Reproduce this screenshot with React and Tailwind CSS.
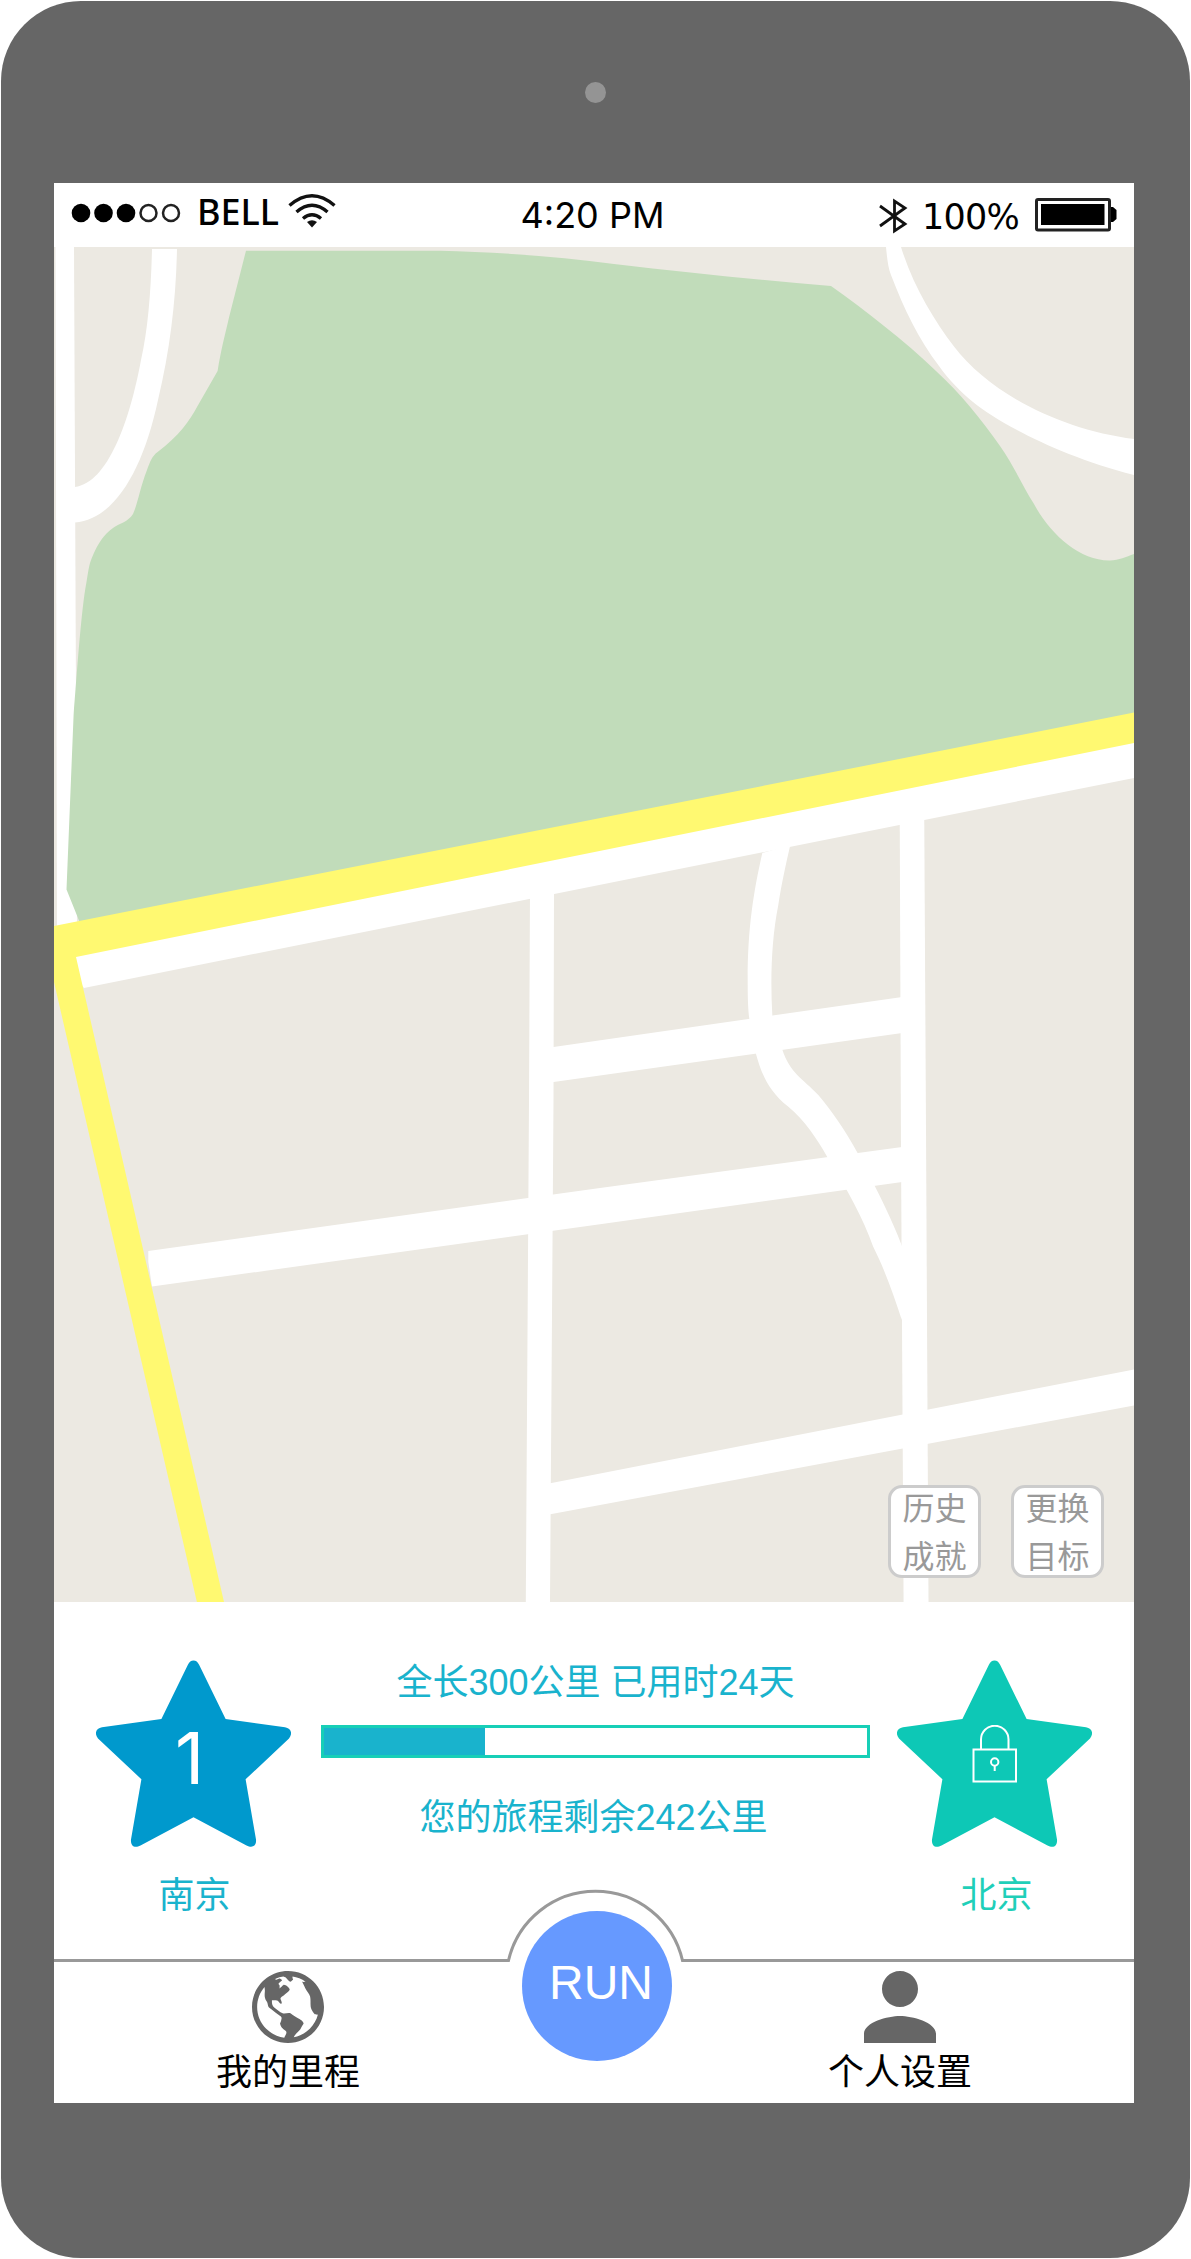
import { IoMdGlobe } from "react-icons/io";

const cjk = "font-['Liberation_Sans','Noto_Sans_CJK_SC',sans-serif] font-normal";

function Star({ className, children }) {
  return (
    <div className="relative h-[187px] w-[195px]">
      <svg viewBox="0 0 195 187" className={`block h-full w-full ${className}`} fill="currentColor">
        <path d="M97.5 0.500C99.9 0.500 101.8 2 103.1 4.8L129.6 59L189 67.3C195 68.2 197 73.6 193 78.5L149.6 119.3L160 179.5C160.6 185.8 156.5 188.6 150.5 185.4L97.5 157.3L44.5 185.4C38.5 188.6 34.4 185.8 35 179.5L45.4 119.3L2 78.5C-2 73.6 0 68.2 6 67.3L65.4 59L91.9 4.8C93.2 2 95.1 0.500 97.5 0.500Z" />
      </svg>
      {children}
    </div>
  );
}

function Lock() {
  return (
    <svg viewBox="0 0 46 58" className="absolute left-[75px] top-[65px] h-[58px] w-[46px]" fill="none" stroke="#fff" strokeWidth="2">
      <path d="M9 24V14.500A13.500 13.500 0 0 1 36.500 14.500V24" />
      <rect x="1.500" y="24.500" width="42.500" height="32" />
      <circle cx="22.700" cy="37" r="3.700" />
      <path d="M22.700 41V46" />
    </svg>
  );
}

function StatusBar() {
  return (
    <header className="relative flex h-16 shrink-0 items-center justify-between bg-white pl-4 pr-[17px] text-black">
      <div className="flex items-center">
        <svg viewBox="0 0 112 20" className="mt-[-4px] h-5 w-28">
          {[11, 33.5, 56].map((x) => (
            <circle key={x} cx={x} cy="10" r="9.300" />
          ))}
          {[78.5, 101].map((x) => (
            <circle key={x} cx={x} cy="10" r="8" fill="none" stroke="#222" strokeWidth="2.500" />
          ))}
        </svg>
        <span className="ml-[15px] mt-[-6px] w-[84px] font-['Noto_Sans'] text-[36px] font-medium leading-[54px]">BELL</span>
        <svg viewBox="0 0 48 36" className="ml-[7px] mt-[-8px] h-9 w-12" fill="none" stroke="#111" strokeWidth="3.400">
          <path d="M1.500 12.500Q24-7 46.500 12.500" />
          <path d="M8.500 19Q24 5.500 39.500 19" />
          <path d="M15 25.500Q24 18 33 25.500" />
          <path d="M19 29Q24 25.500 29 29L24 34.500Z" fill="#111" stroke="none" />
        </svg>
      </div>
      <span className="absolute left-[538.500px] top-[5px] -translate-x-1/2 whitespace-nowrap font-['Inter'] text-[36px] leading-[54px]">
        4:20 PM
      </span>
      <div className="flex items-center">
        <svg viewBox="0 0 32 36" className="mt-[2px] h-9 w-8" fill="none" stroke="#111" strokeWidth="2.800">
          <path d="M3 8L28 26L17.500 33V3L28 10L3 28" />
        </svg>
        <span className="ml-[13px] mt-[3px] w-[102px] whitespace-nowrap font-['DejaVu_Sans'] text-[35px] leading-[54px] tracking-[-0.8px]">
          100%
        </span>
        <svg viewBox="0 0 82 34" className="ml-[11px] h-[34px] w-[82px]">
          <rect x="1.500" y="1.500" width="73" height="30.500" rx="1.500" fill="none" stroke="#222" strokeWidth="3" />
          <rect x="6" y="6" width="63.500" height="21" />
          <path d="M76 9H78L81.500 12V21L78 24H76Z" />
        </svg>
      </div>
    </header>
  );
}

function MapArt() {
  return (
    <svg viewBox="54 247 1080 1355" className="block h-full w-full">
      <rect x="54" y="247" width="1080" height="1355" fill="#ece9e2" />
      <g fill="#fff">
        <path d="M55.500 247H74L76 700L77 930H57Z" />
        <path d="M152 249C151 290 148 330 141 360C130 420 108 483 75 487V522.600C115 519 143 470 158 400C170 350 176 300 177 249Z" />
        <path d="M886 247C887 257 888 268 891 275C904 309 919 340 939 366C949 380 961 392 973 402C999 423 1059 456 1134 475V439C1061 430 989 393 954 346.600C934 320 913 286 901 247Z" />
      </g>
      <path
        fill="#c1dcba"
        d="M246 250.700H439.700C500 252 560 257 614 264C690 273 760 280 831 286C866 311 905 341 936 371C960 393 982 420 1000 446C1014 466 1022 485 1034 504C1050 534 1080 561 1110 560.400C1119 560 1126 557 1134 554V715L80 923L66.500 889.500L73.600 715C76.500 680 81 610 86.500 582C89 567 89 564 93.500 554C98 544 104 534 113 528C120 523 128 522 133 514C138 503 140 488 147 470C150 462 152 456 157.600 452C179 436 190 420 197 407L217.600 371C221 350 225 335 229 317.600Z"
      />
      <g fill="#fff">
        <path d="M60 955L1134 740V778L84 988Z" />
        <path d="M530 890H554L553.500 1100L550 1602H525.800L529 1100Z" />
        <path d="M899.700 810H924.200L926 1130L928.500 1602H903.600L901 1150Z" />
        <path d="M550 1047.400L904 996.700V1032.700L550 1082.500Z" />
        <path d="M148.300 1251L600 1188L904 1146.700V1181.700L600 1224.200L152 1286.600L148.300 1262Z" />
        <path d="M549 1483.500L1134 1369.500V1405.500L549 1514.500Z" />
        <path d="M763 853C754 893 748 930 748.400 985C748.400 1000 749 1012 750 1018.500C751 1032 753 1043 756.700 1054C762 1074 770 1092 788.800 1106.600C806 1121 817 1138 828 1157C848 1190 864 1218 873.800 1246.600C886 1271 894 1294 902.500 1320L906 1255C896 1227 885 1205 875.700 1186.500C868 1173 866 1164 858 1152.500C847 1132 832 1110 819 1095C803 1078 791 1074 782.800 1049C775 1037 773 1025 773 1015C771 980 772 940 779 905C782 885 787 862 791 845Z" transform="translate(-0.7 0)" />
      </g>
      <path fill="#fff971" d="M54 926L1134 712.600V743L76 957L224 1602H196.900L54 982Z" />
    </svg>
  );
}

function MapButton({ lines }) {
  return (
    <button className={`flex h-[93px] w-[93px] flex-col items-center justify-center rounded-[14px] border-[3px] border-[#ccc] bg-white pt-[3px] text-[32px] leading-[48px] text-[#999] ${cjk}`}>
      {lines.map((line) => (
        <span key={line} className="block">{line}</span>
      ))}
    </button>
  );
}

function Journey() {
  return (
    <section className="flex h-[357px] shrink-0 items-start bg-white pl-[42px] text-[36px] leading-[54px] text-[#19b3cd]">
      <div className="mt-[58px] flex flex-col items-center">
        <Star className="text-[#0099cd]">
          <span className="absolute left-[79px] top-[57px] font-['Inter'] text-[72px] leading-[82px] text-white">1</span>
        </Star>
        <p className={`mt-[22px] pl-0.5 ${cjk}`}>南京</p>
      </div>
      <div className={`ml-[30px] mt-[54px] w-[549px] text-center ${cjk}`}>
        <p>全长300公里 已用时24天</p>
        <div className="mt-[15px] h-[33px] border-[3px] border-[#17cfb7]">
          <div className="h-full w-[161px] bg-[#19b3cd]" />
        </div>
        <p className="mt-[33px] pr-1">您的旅程剩余242公里</p>
      </div>
      <div className="ml-[27px] mt-[58px] flex flex-col items-center">
        <Star className="text-[#0dc8b6]">
          <Lock />
        </Star>
        <p className={`mt-[22px] pl-1 text-[#1fcfb9] ${cjk}`}>北京</p>
      </div>
    </section>
  );
}

function NavItem({ label, children }) {
  return (
    <a className="flex w-40 flex-col items-center pt-3">
      {children}
      <span className={`mt-[3px] whitespace-nowrap text-[36px] leading-[54px] text-black ${cjk}`}>{label}</span>
    </a>
  );
}

function BottomNav() {
  return (
    <nav className="relative flex h-36 shrink-0 items-start bg-white">
      <svg viewBox="54 1887 1080 76" className="absolute left-0 top-[-72px] h-[76px] w-[1080px]">
        <path
          d="M54 1960.500H508.500A89.300 89.300 0 0 1 682.500 1960.500H1134"
          fill="#fff"
          stroke="#999"
          strokeWidth="3"
        />
      </svg>
      <div className="relative ml-[154px]">
        <NavItem label="我的里程">
          <IoMdGlobe viewBox="48 48 416 416" className="h-[72px] w-[72px] text-[#666]" />
        </NavItem>
      </div>
      <button className="relative ml-[154px] mt-[-48px] h-[150px] w-[150px] rounded-full bg-[#6699ff] pb-1.5 pl-2 font-['Liberation_Sans'] text-[48px] leading-[54px] text-white">
        RUN
      </button>
      <div className="relative ml-[148px]">
        <NavItem label="个人设置">
          <svg viewBox="4 4 16 16" className="h-[72px] w-[72px] text-[#666]" fill="currentColor">
            <path d="M12 12c2.210 0 4-1.790 4-4s-1.790-4-4-4-4 1.790-4 4 1.790 4 4 4zm0 2c-2.670 0-8 1.340-8 4v2h16v-2c0-2.660-5.330-4-8-4z" />
          </svg>
        </NavItem>
      </div>
    </nav>
  );
}

export default function App() {
  return (
    <div className="h-[2259px] w-[1191px] bg-white p-px">
      <div className="flex h-full w-full flex-col rounded-[80px] bg-[#666] pl-[53px]">
        <div className="flex h-[182px] w-[1083px] shrink-0 justify-center pt-[81px]">
          <div className="h-[21px] w-[21px] rounded-full bg-[#949494]" />
        </div>
        <main className="flex h-[1920px] w-[1080px] flex-col bg-white">
          <StatusBar />
          <div className="relative h-[1355px] shrink-0">
            <MapArt />
            <div className="absolute bottom-6 right-[30px] flex gap-[30px]">
              <MapButton lines={["历史", "成就"]} />
              <MapButton lines={["更换", "目标"]} />
            </div>
          </div>
          <Journey />
          <BottomNav />
        </main>
      </div>
    </div>
  );
}
